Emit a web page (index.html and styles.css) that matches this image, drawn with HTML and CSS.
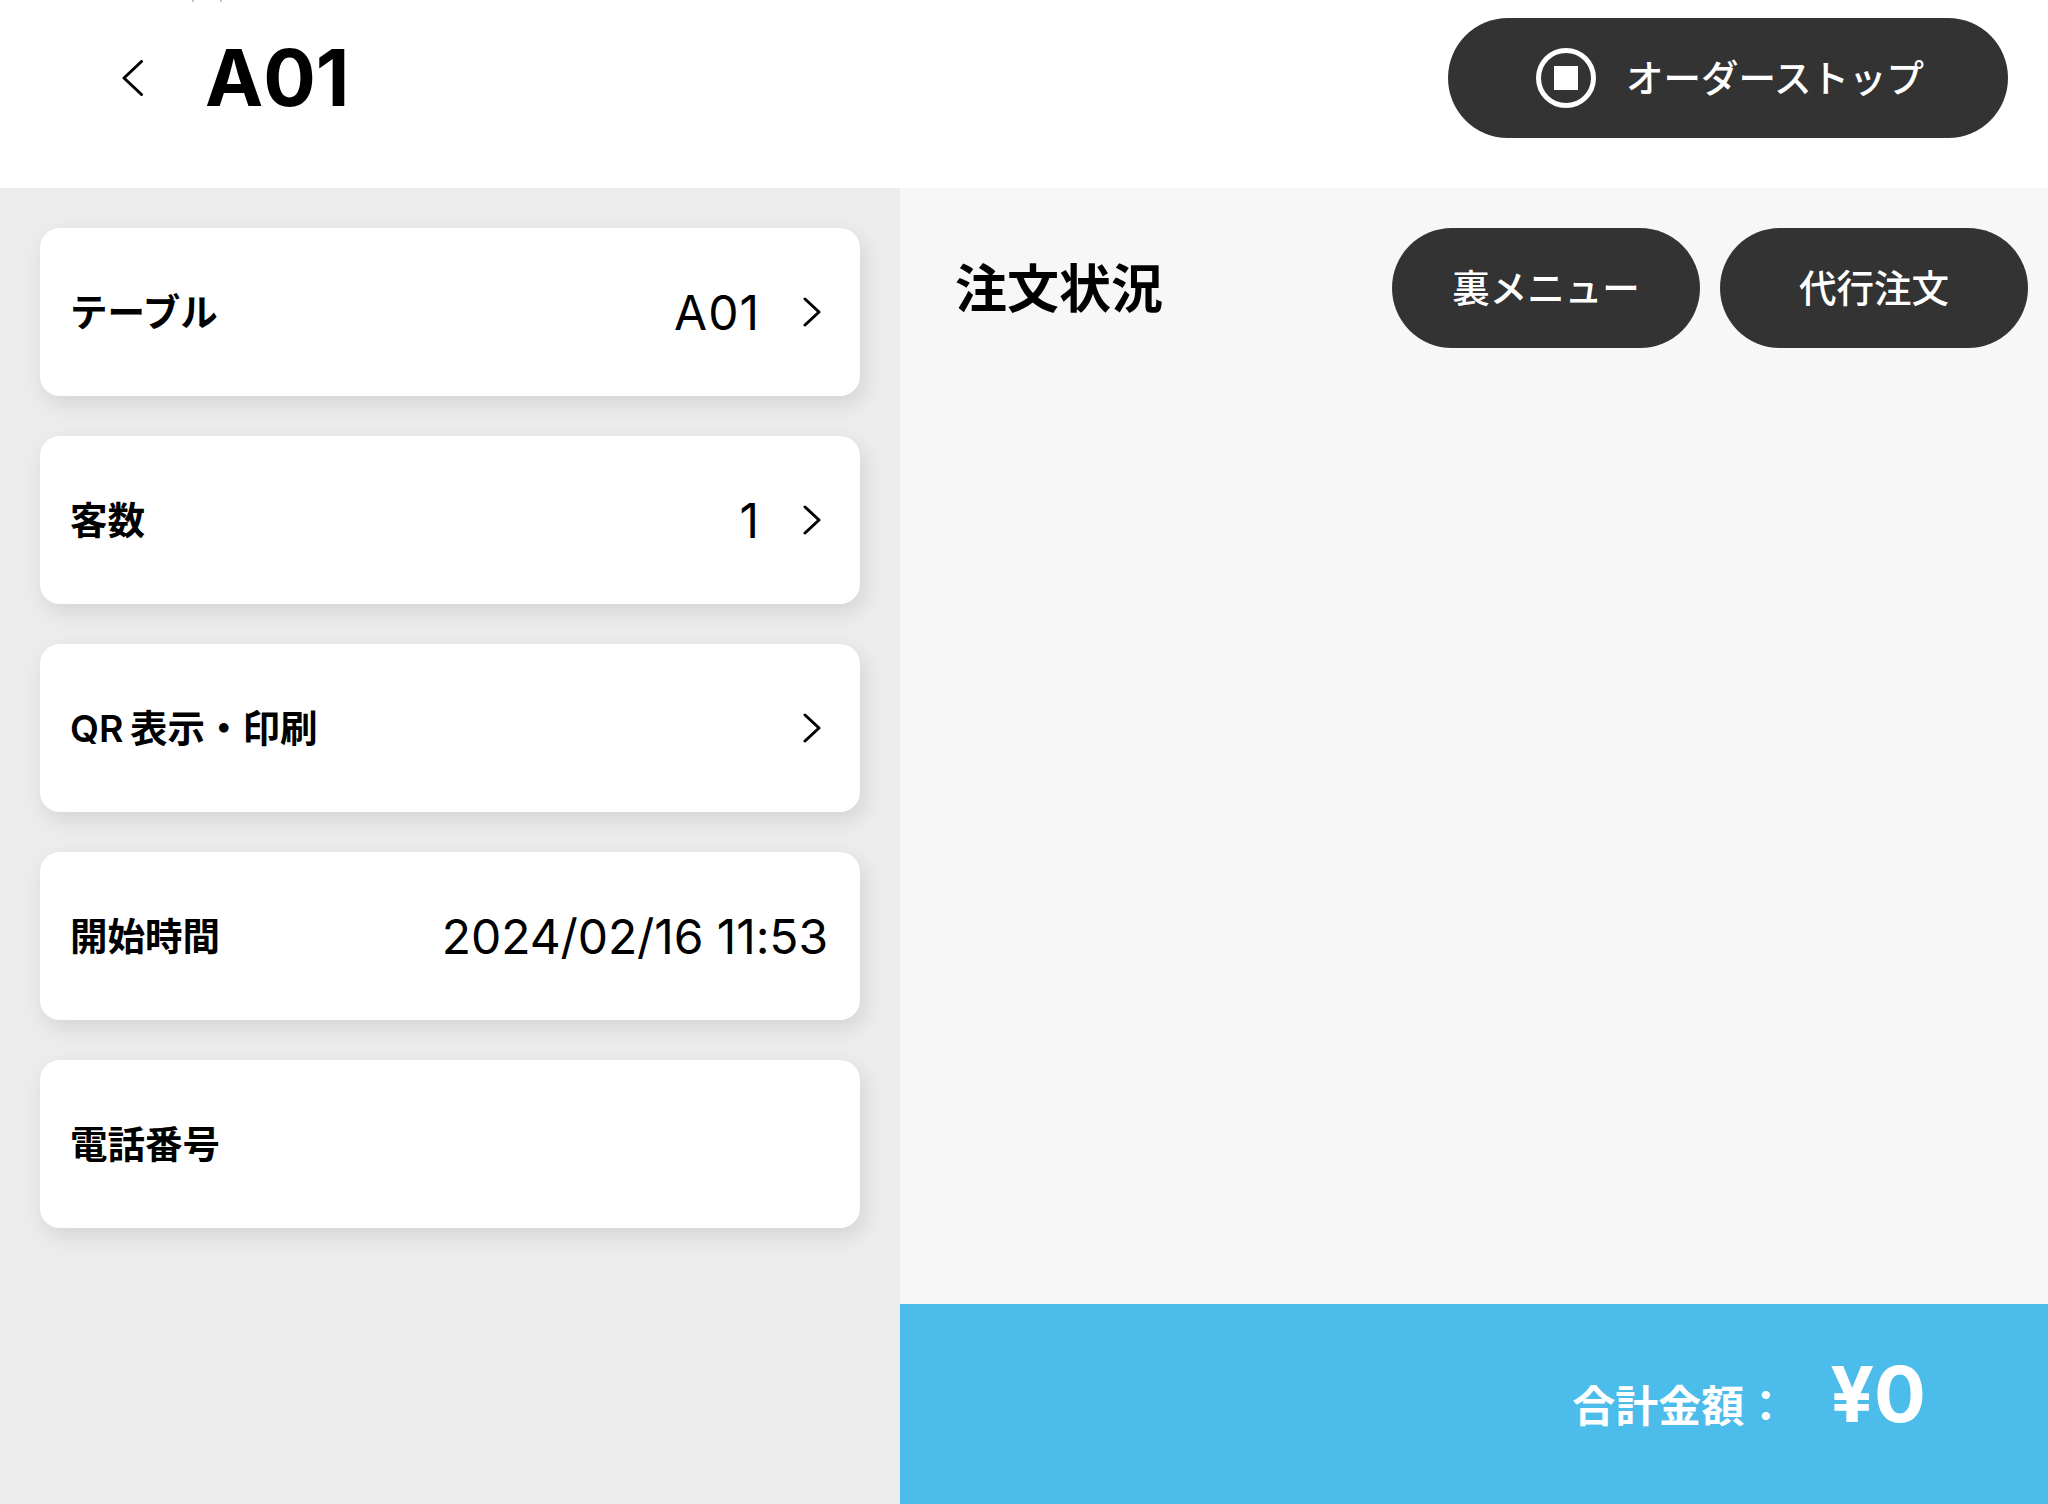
FILE: index.html
```html
<!DOCTYPE html>
<html lang="ja">
<head>
<meta charset="utf-8">
<title>A01</title>
<link rel="stylesheet" href="styles.css">
</head>
<body>
<div class="app">
  <span class="cut-mark cut-mark-a"></span>
  <span class="cut-mark cut-mark-b"></span>
  <header class="topbar">
    <div class="topbar-left">
      <svg class="back-icon" width="21" height="36" viewBox="0 0 21 36"><path d="M19.5 1.5 2 18l17.5 16.5" fill="none" stroke="#000" stroke-width="3" stroke-linecap="round" stroke-linejoin="round"/></svg>
      <h1 class="page-title">A01</h1>
    </div>
    <button class="pill pill-stop">
      <svg class="stop-icon" width="60" height="60" viewBox="0 0 60 60"><circle cx="30" cy="30" r="27.5" fill="none" stroke="#fff" stroke-width="5"/><rect x="18" y="18" width="24" height="24" fill="#fff"/></svg>
      <span class="pill-text">オーダーストップ</span>
    </button>
  </header>
  <main class="main">
    <section class="side">
      <div class="card">
        <span class="card-label">テーブル</span>
        <div class="card-right">
          <span class="card-value">A01</span>
          <svg class="chev" width="18" height="30" viewBox="0 0 18 30"><path d="M2 2l14 13L2 28" fill="none" stroke="#000" stroke-width="3" stroke-linecap="round" stroke-linejoin="round"/></svg>
        </div>
      </div>
      <div class="card">
        <span class="card-label">客数</span>
        <div class="card-right">
          <span class="card-value">1</span>
          <svg class="chev" width="18" height="30" viewBox="0 0 18 30"><path d="M2 2l14 13L2 28" fill="none" stroke="#000" stroke-width="3" stroke-linecap="round" stroke-linejoin="round"/></svg>
        </div>
      </div>
      <div class="card">
        <span class="card-label card-label-mixed">QR 表示・印刷</span>
        <div class="card-right">
          <svg class="chev" width="18" height="30" viewBox="0 0 18 30"><path d="M2 2l14 13L2 28" fill="none" stroke="#000" stroke-width="3" stroke-linecap="round" stroke-linejoin="round"/></svg>
        </div>
      </div>
      <div class="card">
        <span class="card-label">開始時間</span>
        <div class="card-right">
          <span class="card-value card-value-date">2024/02/16 11:53</span>
        </div>
      </div>
      <div class="card">
        <span class="card-label">電話番号</span>
      </div>
    </section>
    <section class="orders">
      <div class="orders-head">
        <h2 class="orders-title">注文状況</h2>
        <div class="orders-actions">
          <button class="pill pill-action"><span class="pill-text">裏メニュー</span></button>
          <button class="pill pill-action"><span class="pill-text">代行注文</span></button>
        </div>
      </div>
      <div class="orders-body"></div>
      <footer class="total">
        <span class="total-label">合計金額：</span>
        <span class="total-value">¥0</span>
      </footer>
    </section>
  </main>
</div>
</body>
</html>
```
FILE: styles.css
```css
* { box-sizing: border-box; }
html, body { margin: 0; padding: 0; }
body {
  width: 2048px;
  height: 1504px;
  overflow: hidden;
  font-family: Inter, "Noto Sans CJK JP", sans-serif;
  color: #000;
  background: #fff;
}
.app {
  position: relative;
  display: flex;
  flex-direction: column;
  height: 1504px;
}
.cut-mark {
  position: absolute;
  top: 0;
  width: 2px;
  height: 2px;
  background: #c4c4c4;
}
.cut-mark-a { left: 192px; }
.cut-mark-b { left: 220px; }
.topbar {
  height: 188px;
  flex: none;
  display: flex;
  align-items: flex-start;
  justify-content: space-between;
  padding: 18px 40px 0 122px;
  background: #fff;
}
.topbar-left {
  display: flex;
  align-items: center;
  gap: 62px;
  height: 120px;
}
.back-icon { flex: none; }
.page-title {
  margin: 0;
  font-size: 78px;
  font-weight: 700;
  line-height: 1;
}
.pill {
  display: flex;
  align-items: center;
  justify-content: center;
  height: 120px;
  border: 0;
  border-radius: 60px;
  background: #333;
  color: #fff;
  font-family: inherit;
  font-size: 37.5px;
  font-weight: 500;
  padding: 0;
}
.pill-text { padding-bottom: 5px; }
.pill-stop {
  width: 560px;
  gap: 30px;
  padding-left: 4px;
}
.pill-action { width: 308px; }
.main {
  flex: 1;
  display: flex;
  min-height: 0;
}
.side {
  width: 900px;
  flex: none;
  display: flex;
  flex-direction: column;
  gap: 40px;
  padding: 40px;
  background: #ececec;
}
.card {
  display: flex;
  align-items: center;
  justify-content: space-between;
  height: 168px;
  padding: 0 32px 0 30px;
  background: #fff;
  border-radius: 20px;
  box-shadow: 4px 8px 20px rgba(0, 0, 0, 0.1);
}
.card-label {
  font-size: 37.5px;
  font-weight: 600;
  padding-bottom: 6px;
}
.card-label-mixed { word-spacing: -3px; }
.card-right {
  display: flex;
  align-items: center;
  gap: 43px;
}
.card-value {
  font-size: 48px;
  font-weight: 400;
  letter-spacing: 1px;
}
.card-value-date { letter-spacing: -0.1px; }
.chev {
  flex: none;
  margin-right: 7px;
}
.orders {
  flex: 1;
  display: flex;
  flex-direction: column;
  background: #f7f7f7;
}
.orders-head {
  display: flex;
  align-items: center;
  justify-content: space-between;
  padding: 40px 20px 0 55px;
}
.orders-title {
  margin: 0 0 6px;
  font-size: 52px;
  font-weight: 700;
}
.orders-actions {
  display: flex;
  gap: 20px;
}
.orders-body { flex: 1; }
.total {
  height: 200px;
  flex: none;
  display: flex;
  align-items: center;
  justify-content: flex-end;
  gap: 43px;
  padding-right: 122px;
  background: #4cbdea;
  color: #fff;
}
.total-label {
  font-size: 43px;
  font-weight: 700;
  padding-bottom: 2px;
}
.total-value {
  font-size: 77px;
  font-weight: 700;
  line-height: 1;
  padding-bottom: 20px;
}
```
